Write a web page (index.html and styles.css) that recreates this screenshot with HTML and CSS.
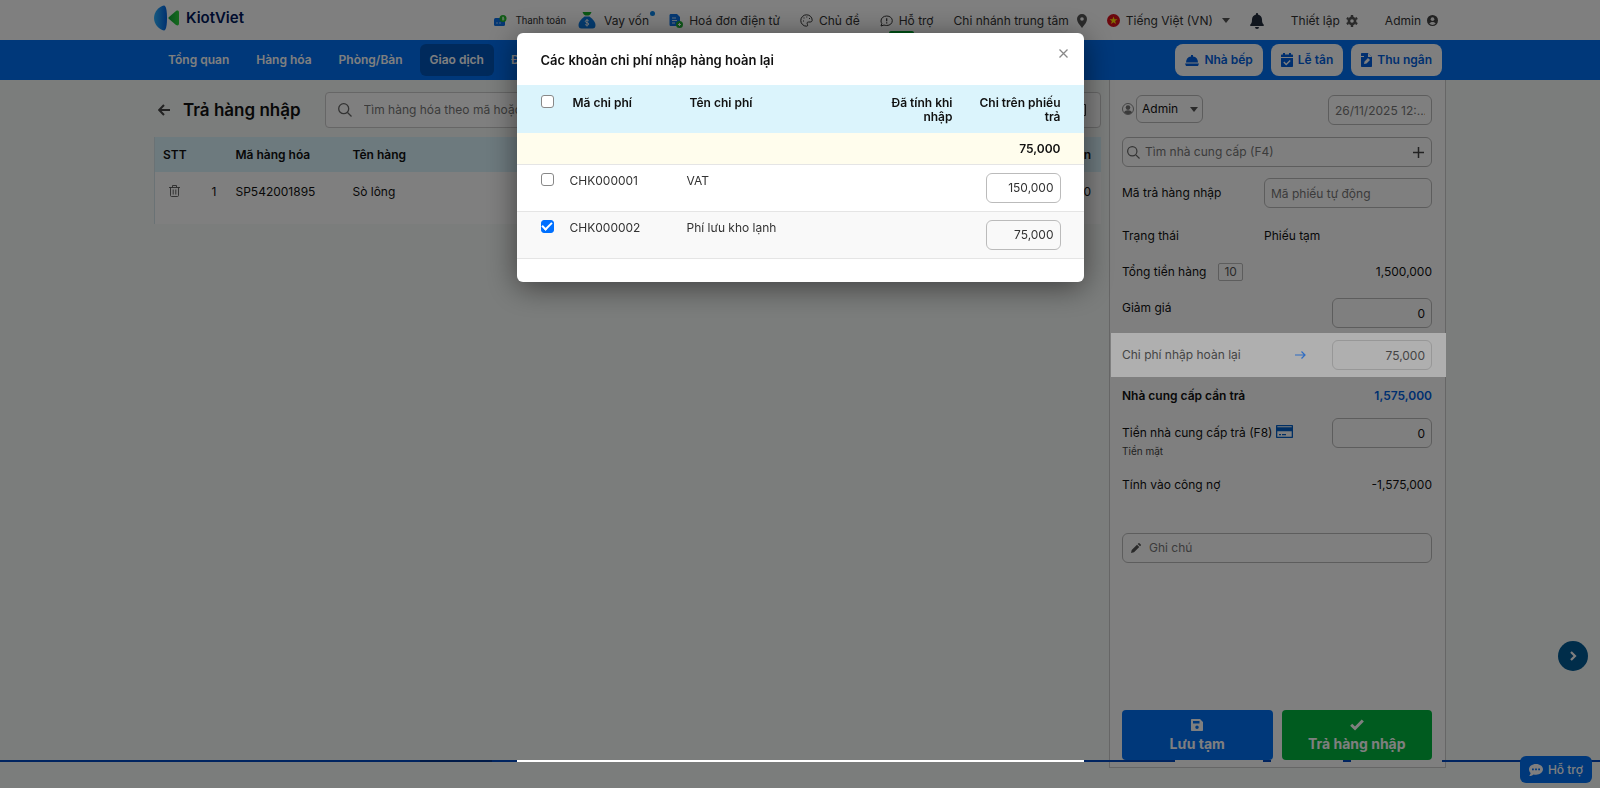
FILE: index.html
```html
<!DOCTYPE html>
<html lang="vi">
<head>
  <meta charset="UTF-8" />
  <meta name="viewport" content="width=device-width, initial-scale=1.0"/>
  <title>KiotViet - Trả hàng nhập</title>
  <link rel="stylesheet" href="styles.css">
</head>
<body>

  <header class="topbar">
    <div class="container topbar-inner">
      <a href="#" class="logo">
        <svg width="26" height="26" viewBox="0 0 26 26">
          <defs>
            <linearGradient id="logo-blue"><stop offset="0" stop-color="#2cb2ff"/><stop offset="1" stop-color="#0062e0"/></linearGradient>
            <linearGradient id="logo-green"><stop offset="0" stop-color="#12a53c"/><stop offset="1" stop-color="#2cd63c"/></linearGradient>
          </defs>
          <path d="M10 .5c2 0 3 5 3 12.500S12 25.500 10 25.500C5 24.500 0 19.500 0 13S5 1.500 10 .5z" fill="url(#logo-blue)"/>
          <path d="M15 12l7-6c1.500-1 3-.5 3 1.500v11c0 2-1.500 2.500-3 1.500l-7-6c-.8-.8-.8-1.200 0-2z" fill="url(#logo-green)"/>
        </svg>
        <span>KiotViet</span>
      </a>
      <nav class="top-links">
        <a href="#" class="pay">
          <svg width="13" height="12" viewBox="0 0 13 12"><rect y="3" width="11" height="8" rx="1.500" fill="#0a6fe8"/><path d="M2 8h2M5 8h2" stroke="#9cf"/><circle cx="9" cy="3.500" r="3.500" fill="#22b82c"/><path d="M10 2.500H8.500v1H10v1.200H8M9 1.500v4" stroke="#d8ffd8" stroke-width=".7" fill="none"/></svg>
          <span>Thanh toán</span>
        </a>
        <a href="#" class="loan">
          <svg width="18" height="17" viewBox="0 0 18 17"><path d="M4.500 0h9c-.5 1.500-1.500 3-3 3.500h-3C6 3 5 1.500 4.500 0z" fill="#16ad2b"/><path d="M6.500 4.500h5c4 3 6 6 6 8.500s-1 3.500-3 3.500h-11c-2 0-3-1-3-3.500s2-5.500 6-8.500z" fill="#0a78e0"/><path d="M10.700 8.800c-.8-1-3.400-.8-3.400.6 0 1.700 3.500 1 3.500 2.600 0 1.500-2.800 1.600-3.700.5M9 7v7.500" stroke="#fff" stroke-width=".9" fill="none"/></svg>
          <span>Vay vốn</span><i class="dot"></i>
        </a>
        <a href="#">
          <svg width="14" height="14" viewBox="0 0 14 14"><path d="M2 0h6l3 3v9H2C1 12 .5 11.500.5 10.500v-9C.5.500 1 0 2 0z" fill="#0a72e8"/><path d="M3 4h4M3 6.500h5M3 9h3" stroke="#cfe6ff"/><circle cx="10.500" cy="10.500" r="3.500" fill="#1fae35"/><path d="M9 10.500h3M10.500 9v3" stroke="#fff"/></svg>
          <span>Hoá đơn điện tử</span>
        </a>
        <a href="#">
          <svg width="13" height="13" viewBox="0 0 13 13" fill="none" stroke="#333"><path d="M6.500.8a5.700 5.700 0 1 0 0 11.400c1.800 0 1-1.700.7-2.400-.5-1.200.3-1.800 1.300-1.800h1.700c1.300 0 2-.8 2-1.800C12.200 3.200 9.700.8 6.500.8z"/><path d="M3 7h1M3.500 4h1M6.300 3h1M9 4.500h1" stroke-width="1.200"/></svg>
          <span>Chủ đề</span>
        </a>
        <a href="#" class="support">
          <svg width="13" height="12" viewBox="0 0 13 12" fill="none" stroke="#333"><path d="M1 11l.8-2.500A5 5 0 0 1 1 6C1 3 3.500 1 6.700 1S12.300 3 12.300 5.700 10 10.500 6.700 10.500c-1 0-2-.2-2.700-.5z"/><path d="M6.700 3.300v3M6.700 7.300v1.200" stroke-width="1.200"/></svg>
          <span>Hỗ trợ</span><em class="badge">Mới</em>
        </a>
        <a href="#" class="branch">
          <span>Chi nhánh trung tâm</span>
          <svg width="10" height="14" viewBox="0 0 10 14"><path fill="#555" fill-rule="evenodd" d="M5 0a5 5 0 0 0-5 5c0 3 2 5 5 9 3-4 5-6 5-9a5 5 0 0 0-5-5zm0 3.200a1.800 1.800 0 1 1 0 3.600 1.800 1.800 0 0 1 0-3.600z"/></svg>
        </a>
        <a href="#" class="lang">
          <svg width="13" height="13" viewBox="0 0 13 13"><circle cx="6.500" cy="6.500" r="6.500" fill="#d80f1a"/><path fill="#ffdf00" d="M6.500 2.500l1 2.800h3L8.100 7.100l.9 2.900-2.500-1.800L4 10l.9-2.900L2.500 5.300h3z"/></svg>
          <span>Tiếng Việt (VN)</span>
          <i class="caret"></i>
        </a>
        <a href="#" class="bell" aria-label="Thông báo">
          <svg width="14" height="16" viewBox="0 0 14 16"><path fill="#222c3c" d="M7 0c.6 0 1 .4 1 1v.6c2.300.5 4 2.400 4 4.900 0 3 .6 4 1.600 5 .8.900.2 1.500-.6 1.500H1c-.8 0-1.400-.6-.6-1.500C1.400 10.500 2 9.500 2 6.500 2 4 3.700 2.100 6 1.600V1c0-.6.4-1 1-1zM5 14h4a2 2 0 0 1-4 0z"/></svg>
        </a>
        <a href="#" class="setup">
          <span>Thiết lập</span>
          <svg width="12" height="12" viewBox="0 0 12 12"><path fill="none" stroke="#555" stroke-width="2.600" d="M6 2.900a3.100 3.100 0 1 1 0 6.200 3.100 3.100 0 0 1 0-6.200z"/><path stroke="#555" stroke-width="2.400" d="M6 0v2M6 10v2M.8 3l1.700 1M9.500 8l1.700 1M.8 9l1.700-1M9.500 4l1.700-1"/></svg>
        </a>
        <a href="#" class="user">
          <span>Admin</span>
          <svg width="11" height="11" viewBox="0 0 12 12"><circle cx="6" cy="6" r="6" fill="#444"/><circle cx="6" cy="4.500" r="2" fill="#eee"/><path d="M2.500 9.300c1-2.400 6-2.400 7 0-1.700 2-5.300 2-7 0z" fill="#eee"/></svg>
        </a>
      </nav>
    </div>
  </header>

  <nav class="mainnav">
    <div class="container mainnav-inner">
      <a href="#">Tổng quan</a>
      <a href="#">Hàng hóa</a>
      <a href="#">Phòng/Bàn</a>
      <a href="#" class="active">Giao dịch</a>
      <a href="#">Đối tác</a>
      <div class="nav-actions">
        <button type="button">
          <svg width="14" height="11" viewBox="0 0 14 11" fill="currentColor"><path d="M6 0h2v1.500c3 .4 5 2.500 5 6H1c0-3.500 2-5.600 5-6zM0 8.500h14L13 11H1z"/></svg>
          Nhà bếp
        </button>
        <button type="button">
          <svg width="12" height="14" viewBox="0 0 12 14" fill="currentColor"><path fill-rule="evenodd" d="M2 0h2v1.500h4V0h2v1.500h1c.6 0 1 .4 1 1V4H0V2.500c0-.6.4-1 1-1h1zM0 5h12v8c0 .6-.4 1-1 1H1c-.6 0-1-.4-1-1zm3.300 3.500L2.300 9.500 5.200 12.400 9.700 7.900 8.700 6.900 5.200 10.400z"/></svg>
          Lễ tân
        </button>
        <button type="button">
          <svg width="11" height="14" viewBox="0 0 11 14"><path fill="currentColor" d="M1 0h6l4 4v9c0 .6-.4 1-1 1H1c-.6 0-1-.4-1-1V1c0-.6.4-1 1-1z"/><path fill="#fff" d="M7 0l4 4H7zM3 11l.5-2.500L7 5l2 2-3.500 3.500zM0 3h3v1H0z"/></svg>
          Thu ngân
        </button>
      </div>
    </div>
  </nav>

  <main class="container page">
    <section class="goods">
      <div class="goods-head">
        <a href="#" class="back" aria-label="Quay lại">
          <svg width="12" height="12" viewBox="0 0 12 12" fill="none" stroke="#444" stroke-width="2"><path d="M12 6H1.500M6 1L1.200 6 6 11"/></svg>
        </a>
        <h1>Trả hàng nhập</h1>
        <div class="goods-search">
          <svg width="14" height="14" viewBox="0 0 14 14" fill="none" stroke="#666" stroke-width="1.300"><circle cx="5.700" cy="5.700" r="5"/><path d="M9.500 9.500L13.500 13.500"/></svg>
          <input type="text" aria-label="Tìm hàng hóa" placeholder="Tìm hàng hóa theo mã hoặc tên (F3)" />
          <svg width="12" height="12" viewBox="0 0 12 12" fill="none" stroke="#333"><path d="M3 .5H.5V11.500H3M9 .5h2.500v11H9M4 3v6M7 3v6"/></svg>
        </div>
      </div>
      <table class="goods-table">
        <thead>
          <tr><th class="col-del">STT</th><th class="col-no"></th><th class="col-code">Mã hàng hóa</th><th>Tên hàng</th><th class="num">Thành tiền</th></tr>
        </thead>
        <tbody>
          <tr>
            <td class="col-del">
              <button type="button" class="trash" aria-label="Xóa">
                <svg width="11" height="12" viewBox="0 0 11 12" fill="none" stroke="#555"><path d="M0 2.500h11M3.500 2.500v-2h4v2M1.500 2.500v8c0 .6.400 1 1 1h6c.6 0 1-.4 1-1v-8M4.200 4.500v5M6.800 4.500v5" stroke-width=".9"/></svg>
              </button>
            </td>
            <td class="col-no">1</td><td class="col-code">SP542001895</td><td>Sò lông</td><td class="num">1,500,000</td>
          </tr>
        </tbody>
      </table>
    </section>

    <aside class="panel">
      <div class="panel-top">
        <svg width="12" height="12" viewBox="0 0 12 12"><circle cx="6" cy="6" r="5.500" fill="none" stroke="#888"/><circle cx="6" cy="4.600" r="2.300" fill="#777"/><path d="M2 9.500c1-3 7-3 8 0-2 2-6 2-8 0z" fill="#777"/></svg>
        <span class="select-wrap">
          <select aria-label="Người trả"><option>Admin</option></select>
          <i class="caret"></i>
        </span>
        <input type="text" class="field date" aria-label="Thời gian" value="26/11/2025 12:..." />
      </div>
      <div class="field supplier">
        <svg width="13" height="13" viewBox="0 0 14 14" fill="none" stroke="#666" stroke-width="1.300"><circle cx="5.700" cy="5.700" r="5"/><path d="M9.500 9.500L13.500 13.500"/></svg>
        <input type="text" aria-label="Nhà cung cấp" placeholder="Tìm nhà cung cấp (F4)" />
        <button type="button" aria-label="Thêm nhà cung cấp">
          <svg width="11" height="11" viewBox="0 0 11 11" stroke="#444" stroke-width="1.500"><path d="M5.500 0v11M0 5.500h11"/></svg>
        </button>
      </div>
      <div class="row tall">
        <label for="code">Mã trả hàng nhập</label>
        <input type="text" id="code" class="field code" placeholder="Mã phiếu tự động" />
      </div>
      <div class="row status"><span>Trạng thái</span><span class="status-value">Phiếu tạm</span></div>
      <div class="row"><span>Tổng tiền hàng</span><span class="qty">10</span><span class="value">1,500,000</span></div>
      <div class="row discount">
        <label for="discount">Giảm giá</label>
        <input type="text" id="discount" class="field money" value="0" />
      </div>
      <div class="row highlight">
        <label for="refund">Chi phí nhập hoàn lại</label>
        <a href="#" class="detail" aria-label="Chi tiết">
          <svg width="11" height="8" viewBox="0 0 11 8" fill="none" stroke="currentColor" stroke-width="1.200"><path d="M0 4h10M6.500.500L10 4 6.500 7.500"/></svg>
        </a>
        <input type="text" id="refund" class="field money" value="75,000" />
      </div>
      <div class="row due"><span>Nhà cung cấp cần trả</span><span class="value">1,575,000</span></div>
      <div class="row paid">
        <div>
          <label for="paid">Tiền nhà cung cấp trả (F8)</label>
          <small>Tiền mặt</small>
        </div>
        <svg width="17" height="13" viewBox="0 0 17 13"><path fill="#005fc8" fill-rule="evenodd" d="M1 0h15c.6 0 1 .4 1 1v11c0 .6-.4 1-1 1H1c-.6 0-1-.4-1-1V1c0-.6.4-1 1-1zm.3 1.200v1h14.400v-1zm0 5v5.600h14.400V6.200zM3 9h2v1.300H3zM6 9h4v1.300H6z"/></svg>
        <input type="text" id="paid" class="field money" value="0" />
      </div>
      <div class="row"><span>Tính vào công nợ</span><span class="value">-1,575,000</span></div>
      <div class="field note">
        <svg width="10" height="10" viewBox="0 0 10 10" fill="#555"><path d="M0 10l.7-3L6 1.700 8.300 4 3 9.300zM6.700 1L7.500.2c.3-.3.600-.3.900 0l1.400 1.400c.3.300.3.600 0 .9L9 3.300z"/></svg>
        <input type="text" aria-label="Ghi chú" placeholder="Ghi chú" />
      </div>
      <div class="actions">
        <button type="button" class="btn-draft">
          <svg width="12" height="12" viewBox="0 0 12 12" fill="currentColor"><path fill-rule="evenodd" d="M1 0h8l3 3v8c0 .6-.4 1-1 1H1c-.6 0-1-.4-1-1V1c0-.6.4-1 1-1zm1 2v2.500h6.500V2zm4 4.500A1.700 1.700 0 1 0 6 10a1.700 1.700 0 0 0 0-3.500z"/></svg>
          <span>Lưu tạm</span>
        </button>
        <button type="button" class="btn-done">
          <svg width="14" height="12" viewBox="0 0 14 12" fill="none" stroke="currentColor" stroke-width="3"><path d="M1.200 5.800L5 9.500 12.800 1.500"/></svg>
          <span>Trả hàng nhập</span>
        </button>
      </div>
    </aside>
  </main>

  <!-- edge of the next screen: nav line and its buttons -->
  <div class="strip">
    <div class="container strip-inner"><i class="tab"></i><i class="pill first"></i><i class="pill second"></i><i class="pill third"></i></div>
  </div>

  <button type="button" class="next" aria-label="Tiếp">
    <svg width="7" height="10" viewBox="0 0 7 10" fill="none" stroke="currentColor" stroke-width="2.200"><path d="M1 1l4 4-4 4"/></svg>
  </button>
  <button type="button" class="chat">
    <svg width="14" height="12" viewBox="0 0 14 12"><path fill="currentColor" d="M7 0c4 0 7 2.300 7 5.300s-3 5.400-7 5.400c-.9 0-1.700-.1-2.500-.3C3.300 11.300 1.800 12 .2 12c.7-.8 1.300-1.700 1.400-2.900C.6 8 0 6.800 0 5.300 0 2.300 3 0 7 0z"/><path d="M3 5.300h1.800M6.100 5.300h1.800M9.200 5.300H11" stroke="#0070f4" stroke-width="1.800"/></svg>
    Hỗ trợ
  </button>

  <div class="overlay">
    <div class="modal" role="dialog" aria-labelledby="modal-title">
      <div class="modal-head">
        <h2 id="modal-title">Các khoản chi phí nhập hàng hoàn lại</h2>
        <button type="button" class="close" aria-label="Đóng">
          <svg width="9" height="9" viewBox="0 0 9 9" stroke="#888" stroke-width="1.300"><path d="M.5.500l8 8M8.500.500l-8 8"/></svg>
        </button>
      </div>
      <table class="cost-table">
        <thead>
          <tr>
            <th class="check"><input type="checkbox" aria-label="Chọn tất cả" /></th>
            <th class="cost-code">Mã chi phí</th>
            <th>Tên chi phí</th>
            <th class="cost-in">Đã tính khi nhập</th>
            <th class="cost-out">Chi trên phiếu trả</th>
          </tr>
        </thead>
        <tbody>
          <tr class="total"><td colspan="5">75,000</td></tr>
          <tr>
            <td class="check"><input type="checkbox" aria-label="CHK000001" /></td>
            <td>CHK000001</td><td>VAT</td><td></td>
            <td class="cost-out"><input type="text" class="field" aria-label="Chi VAT" value="150,000" /></td>
          </tr>
          <tr class="selected">
            <td class="check"><input type="checkbox" aria-label="CHK000002" checked /></td>
            <td>CHK000002</td><td>Phí lưu kho lạnh</td><td></td>
            <td class="cost-out"><input type="text" class="field" aria-label="Chi phí lưu kho lạnh" value="75,000" /></td>
          </tr>
        </tbody>
      </table>
    </div>
    <div class="modal-edge"></div>
  </div>

</body>
</html>
```
FILE: styles.css
```css
:root {
  --primary-color: #0070f4;
  --success-color: #00b63e;
  --border-color: #bbb;
  --head-color: #dbf4fc;
}

* {
  box-sizing: border-box;
}

body {
  margin: 0;
  min-height: 100vh;
  display: flex;
  flex-direction: column;
  background: #f7faf8;
  color: #111;
  font-family: Inter, 'Noto Sans', sans-serif;
  font-size: 12px;
  line-height: 16px;
}

a {
  color: inherit;
  text-decoration: none;
}

svg {
  flex: none;
}

button,
input,
select {
  font: inherit;
  color: inherit;
}

button {
  cursor: pointer;
}

.container {
  width: 100%;
  max-width: 1292px;
  margin: 0 auto;
}

/* top bar */
.topbar {
  background: #fff;
}

.topbar-inner {
  display: flex;
  align-items: center;
  justify-content: space-between;
  height: 40px;
}

.logo {
  display: flex;
  align-items: center;
  gap: 6px;
  padding-bottom: 4px;
  font-size: 15px;
  font-weight: 600;
  color: #00195c;
}

.top-links {
  display: flex;
  align-items: center;
  gap: 20px;
  padding: 1px 8px 0 0;
  color: #333;
}

.top-links a {
  display: flex;
  align-items: center;
  gap: 6px;
  position: relative;
}

.top-links .pay {
  gap: 9px;
  margin-right: -8px;
  font-family: Roboto, sans-serif;
  font-size: 10px;
}

.top-links .loan,
.top-links .branch {
  gap: 8px;
}

.dot {
  position: absolute;
  top: -1px;
  right: -6px;
  width: 5px;
  height: 5px;
  border-radius: 50%;
  background: #0a84e8;
}

.badge {
  position: absolute;
  top: 18px;
  left: 9px;
  padding: 0 4px;
  border-radius: 2px;
  background: #00a52e;
  color: #fff;
  font-size: 10px;
  font-style: normal;
}

.caret {
  border: 4px solid transparent;
  border-top: 5px solid #555;
  border-bottom: 0;
}

.lang .caret {
  margin-left: 3px;
}

.top-links .setup,
.top-links .user {
  margin-left: 7px;
}

/* main nav */
.mainnav {
  background: var(--primary-color);
  color: #fff;
  font-weight: 600;
}

.mainnav-inner {
  display: flex;
  align-items: center;
  gap: 7px;
  height: 40px;
  padding: 0 4px;
}

.mainnav-inner a {
  padding: 8px 10px;
  border-radius: 6px;
}

.mainnav-inner .active {
  background: #0055b8;
}

.nav-actions {
  display: flex;
  gap: 8px;
  margin-left: auto;
}

.nav-actions button {
  display: flex;
  align-items: center;
  gap: 5px;
  padding: 8px 10px;
  border: 0;
  border-radius: 8px;
  background: #fff;
  color: #005fe0;
}

/* page */
.page {
  flex: 1;
  display: flex;
  align-items: stretch;
  padding-bottom: 20px;
}

.goods {
  flex: 1;
  margin-right: 8px;
}

.goods-head {
  display: flex;
  align-items: center;
  padding: 12px 0 9px 4px;
}

.back {
  display: flex;
}

h1 {
  margin: 0 24px 0 13px;
  font-size: 17px;
  font-weight: 600;
  line-height: 24px;
}

.goods-search {
  flex: 1;
  display: flex;
  align-items: center;
  gap: 12px;
  height: 36px;
  padding: 0 14px 0 12px;
  border: 1px solid #ccc;
  border-radius: 4px;
  background: #fff;
}

.goods-search input,
.supplier input,
.note input {
  flex: 1;
  min-width: 0;
  padding: 0;
  border: 0;
  background: none;
  outline: none;
}

::placeholder {
  color: #777;
  opacity: 1;
}

.goods-table {
  width: 100%;
  border-collapse: collapse;
  border-left: 1px solid #d5e5ea;
  background: #fff;
  text-align: left;
}

.goods-table th {
  height: 35px;
  padding: 0 10px 0 8px;
  background: var(--head-color);
  font-weight: 600;
}

.goods-table td {
  height: 52px;
  padding: 12px 10px 24px 8px;
  line-height: 16px;
  vertical-align: top;
}

.goods-table .col-del {
  width: 50px;
}

.goods-table .col-no {
  width: 23px;
  padding-right: 11px;
  padding-left: 0;
  text-align: right;
}

.goods-table .col-code {
  width: 117px;
}

.goods-table .num {
  text-align: right;
}

.trash {
  display: block;
  margin: 1px 6px;
  padding: 0;
  border: 0;
  background: none;
  line-height: 0;
}

/* right panel */
.panel {
  display: flex;
  flex-direction: column;
  width: 337px;
  padding: 12px 13px 7px 12px;
  border: 1px solid #ccc;
  border-top: 0;
  background: #fff;
}

.field {
  height: 30px;
  padding: 0 6px;
  border: 1px solid var(--border-color);
  border-radius: 6px;
  background: transparent;
  outline: none;
}

.panel-top {
  display: flex;
  align-items: center;
  gap: 2px;
  margin-bottom: 12px;
}

.select-wrap {
  position: relative;
}

.select-wrap select {
  display: block;
  width: 67px;
  height: 28px;
  padding: 0 5px;
  border: 1px solid var(--border-color);
  border-radius: 6px;
  background: transparent;
  appearance: none;
}

.select-wrap .caret {
  position: absolute;
  top: 12px;
  right: 5px;
}

.date {
  width: 104px;
  margin: 3px 0 0 auto;
  color: #777;
}

.supplier {
  display: flex;
  align-items: center;
  gap: 5px;
  padding: 0 7px 0 4px;
}

.supplier button {
  display: flex;
  padding: 0;
  border: 0;
  background: none;
}

.row {
  display: flex;
  align-items: center;
  min-height: 37px;
}

.row.tall {
  min-height: 52px;
}

.row .code {
  width: 168px;
  margin-left: auto;
}

.row.status {
  min-height: 34px;
}

.status-value {
  width: 168px;
  margin-left: auto;
}

.qty {
  margin-left: 12px;
  padding: 0 5px;
  border: 1px solid var(--border-color);
  border-radius: 2px;
  color: #555;
}

.value {
  margin-left: auto;
}

.money {
  width: 100px;
  margin-left: auto;
  text-align: right;
}

.row.discount {
  min-height: 43px;
  align-items: flex-start;
  padding-top: 8px;
}

.row.discount label {
  padding-top: 2px;
}

/* called-out row, stays above the dimmed page */
.highlight {
  position: relative;
  z-index: 20;
  min-height: 44px;
  margin: 0 -14px 0 -11px;
  padding: 0 14px 0 11px;
  background: #afafaf;
  color: #444;
}

.highlight .field {
  border-color: #979797;
}

.detail {
  display: flex;
  margin-left: 54px;
  color: #2f6dc4;
}

.row.due {
  font-weight: 600;
}

.row.due .value {
  color: #005fe0;
}

.row.paid {
  min-height: 52px;
  align-items: flex-start;
  padding-top: 4px;
}

.paid label,
.paid small {
  display: block;
}

.paid label {
  padding-top: 7px;
}

.paid small {
  padding-top: 2px;
  font-size: 10px;
  color: #444;
}

.paid svg {
  margin: 7px 0 0 4px;
}

.note {
  display: flex;
  align-items: center;
  gap: 8px;
  margin-top: 30px;
  padding-left: 8px;
}

.actions {
  display: grid;
  grid-template-columns: 1fr 1fr;
  gap: 9px;
  margin-top: auto;
}

.actions button {
  display: flex;
  flex-direction: column;
  align-items: center;
  gap: 4px;
  height: 50px;
  padding: 9px 0 0;
  border: 0;
  border-radius: 4px;
  color: #fff;
  font-size: 14px;
  font-weight: 700;
  line-height: 18px;
}

.btn-draft {
  background: var(--primary-color);
}

.btn-done {
  background: var(--success-color);
}

.strip {
  position: fixed;
  right: 0;
  bottom: 26px;
  left: 0;
  height: 2px;
  background: #0048c0;
}

.strip-inner {
  display: flex;
  gap: 8px;
  height: 2px;
  padding: 0 4px;
}

.strip .tab {
  width: 72px;
  margin: 0 auto 0 262px;
  background: #003590;
}

.strip .pill {
  background: #fff;
}

.strip .first {
  width: 88px;
}

.strip .second {
  width: 72px;
}

.strip .third {
  width: 91px;
}

.next {
  position: fixed;
  right: 12px;
  bottom: 117px;
  display: flex;
  align-items: center;
  justify-content: center;
  width: 30px;
  height: 30px;
  padding: 0;
  border: 0;
  border-radius: 50%;
  background: #005a94;
  color: #fff;
}

.chat {
  position: fixed;
  right: 8px;
  bottom: 5px;
  display: flex;
  align-items: center;
  gap: 5px;
  height: 27px;
  padding: 0 9px;
  border: 0;
  border-radius: 6px;
  background: var(--primary-color);
  color: #fff;
  font-weight: 500;
}

/* modal */
.overlay {
  position: fixed;
  inset: 0;
  z-index: 10;
  padding-top: 33px;
  background: rgba(0, 0, 0, 0.5);
}

.modal {
  max-width: 567px;
  margin: 0 auto;
  padding-bottom: 23px;
  overflow: hidden;
  border-radius: 6px;
  background: #fff;
  box-shadow: 0 5px 30px rgba(0, 0, 0, 0.5);
}

.modal-edge {
  position: absolute;
  right: 0;
  bottom: 26px;
  left: 0;
  max-width: 567px;
  height: 2px;
  margin: 0 auto;
  background: #fff;
}

.modal-head {
  display: flex;
  align-items: flex-start;
  justify-content: space-between;
  padding: 16px 16px 14px 24px;
}

h2 {
  margin: 0;
  font-size: 13px;
  font-weight: 600;
  line-height: 22px;
}

.close {
  display: flex;
  padding: 0;
  border: 0;
  background: none;
}

.cost-table {
  width: 100%;
  border-collapse: collapse;
  color: #333;
  text-align: left;
}

.cost-table th {
  height: 48px;
  padding: 11px 23px 7px 12px;
  background: var(--head-color);
  color: #111;
  font-weight: 600;
  line-height: 14px;
  vertical-align: top;
}

.cost-table td {
  height: 47px;
  padding: 8px 23px 8px 9px;
  border-top: 1px solid #e5e5e5;
  border-bottom: 1px solid #e5e5e5;
  vertical-align: top;
}

.cost-table .check {
  width: 44px;
  padding-right: 0;
  padding-left: 24px;
}

.cost-table th.check {
  padding-top: 10px;
}

.cost-table .cost-code {
  width: 117px;
}

.cost-table .cost-in {
  width: 108px;
  text-align: right;
}

.cost-table .cost-out {
  width: 108px;
  padding-left: 0;
  text-align: right;
}

.cost-table .total td {
  height: 31px;
  padding-top: 8px;
  padding-bottom: 6px;
  border-top: 0;
  background: #fffded;
  color: #111;
  font-weight: 600;
  text-align: right;
}

.cost-table .selected td {
  background: #f9f9f9;
}

.cost-table .field {
  display: block;
  width: 75px;
  margin-left: auto;
  text-align: right;
}

.cost-table input[type="checkbox"] {
  display: block;
  width: 13px;
  height: 13px;
  margin: 0;
  border: 1px solid #888;
  border-radius: 3px;
  background: #fff;
  appearance: none;
}

.cost-table input[type="checkbox"]:checked {
  display: grid;
  place-items: center;
  border-color: #0070ff;
  background: #0070ff;
}

.cost-table input[type="checkbox"]:checked::after {
  content: '';
  width: 8px;
  height: 4px;
  margin-bottom: 2px;
  border: solid #fff;
  border-width: 0 0 2px 2px;
  transform: rotate(-45deg);
}
```
